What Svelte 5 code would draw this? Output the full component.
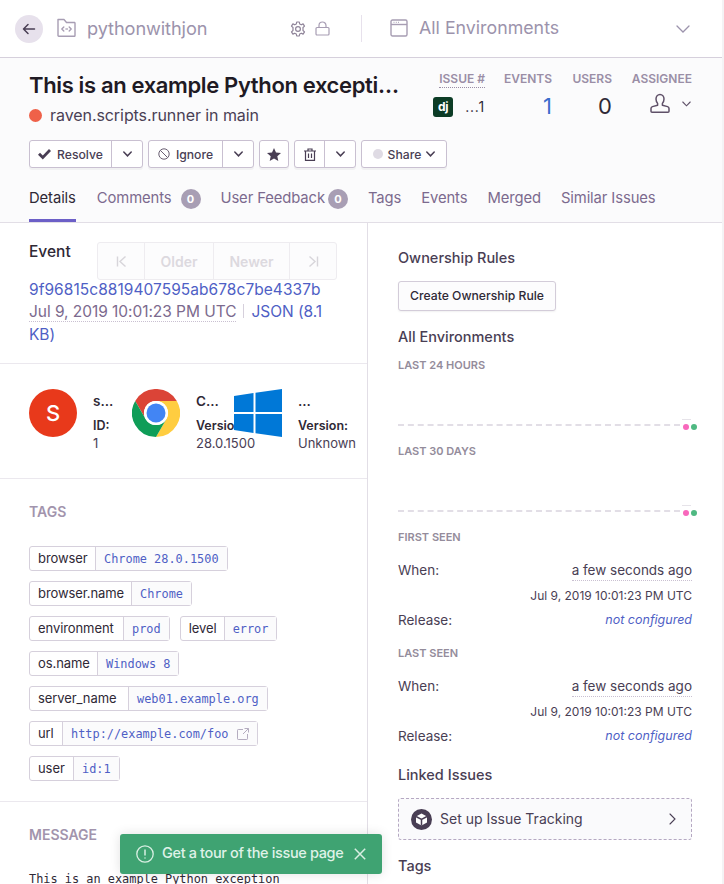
<script>
  const tags = [
    [{ k: 'browser', w: 65, v: 'Chrome 28.0.1500' }],
    [{ k: 'browser.name', w: 101, v: 'Chrome' }],
    [{ k: 'environment', w: 93, v: 'prod' }, { k: 'level', w: 43, v: 'error' }],
    [{ k: 'os.name', w: 67, v: 'Windows 8' }],
    [{ k: 'server_name', w: 98, v: 'web01.example.org' }],
    [{ k: 'url', w: 32, v: 'http://example.com/foo', ext: true }],
    [{ k: 'user', w: 43, v: 'id:1' }]
  ];
  const seen = ['FIRST SEEN', 'LAST SEEN'];
  const charts = ['LAST 24 HOURS', 'LAST 30 DAYS'];
</script>

<div class="page">
  <header class="top">
    <button class="back" aria-label="Back">
      <svg width="14" height="14" viewBox="0 0 14 14" fill="none" stroke="#493e54" stroke-width="1.5" stroke-linecap="round" stroke-linejoin="round"><path d="M1.5 7H12.5M6 2.5L1.5 7L6 11.5"/></svg>
    </button>
    <svg class="folder" width="19" height="20" viewBox="0 0 19 20" fill="none" stroke="#a79db3" stroke-width="1.4" stroke-linejoin="round"><path d="M1 1.5H7L9.5 4.5H17.5A.8.8 0 0 1 18 5.2V17.5A.8.8 0 0 1 17.5 18.3H1.8A.8.8 0 0 1 1 17.5Z"/><path d="M6.8 9L4.8 11L6.8 13M12.2 9L14.2 11L12.2 13M9 11H9.1M10.2 11H10.3" stroke-linecap="round"/></svg>
    <span class="project">pythonwithjon</span>
    <svg class="gear" width="16" height="16" viewBox="0 0 16 16" fill="none" stroke="#8f8499" stroke-width="1.2" stroke-linejoin="round"><circle cx="8" cy="8" r="2.4"/><path d="M6.7 1H9.3L9.7 3L11.3 3.8L13.1 2.9L14.5 5.1L13 6.5V9.5L14.5 10.9L13.1 13.1L11.3 12.2L9.7 13L9.3 15H6.7L6.3 13L4.7 12.2L2.9 13.1L1.5 10.9L3 9.5V6.5L1.5 5.1L2.9 2.9L4.7 3.8L6.3 3Z"/></svg>
    <svg class="lock" width="15" height="15" viewBox="0 0 15 15" fill="none" stroke="#a79db3" stroke-width="1.2"><rect x="1" y="6.5" width="13" height="7.5" rx="1"/><path d="M4 6.5V4.5A3.5 3.5 0 0 1 11 4.5V6.5"/></svg>
    <span class="vline"></span>
    <svg class="envicon" width="18" height="18" viewBox="0 0 18 18" fill="none" stroke="#a79db3" stroke-width="1.4"><rect x="1" y="1" width="16" height="16" rx="1.5"/><path d="M1 5.5H17"/><path d="M3.5 3.3H4.5M5.8 3.3H6.8M8 3.3H9" stroke-width="1"/></svg>
    <span class="envname">All Environments</span>
    <svg class="envchev" width="14" height="8" viewBox="0 0 14 8" fill="none" stroke="#9c93ac" stroke-width="1.3" stroke-linecap="round"><path d="M1 1L7 7L13 1"/></svg>
  </header>

  <section class="group">
    <div class="grouptop">
      <div class="titles">
        <h1>This is an example Python exception</h1>
        <div class="culprit"><span class="errdot"></span>raven.scripts.runner in main</div>
      </div>
      <div class="stats">
        <div class="stat s-issue">
          <span class="lab dotted">ISSUE #</span>
          <div class="issueval">
            <span class="dj">dj</span>
            <span class="short">...1</span>
          </div>
        </div>
        <div class="stat s-events"><span class="lab">EVENTS</span><span class="num blue">1</span></div>
        <div class="stat s-users"><span class="lab">USERS</span><span class="num">0</span></div>
        <div class="stat s-assign">
          <span class="lab">ASSIGNEE</span>
          <div class="assignee">
            <svg width="20" height="20" viewBox="0 0 20 20" fill="none" stroke="#5f5068" stroke-width="1.5" stroke-linejoin="round"><path d="M6 6A4 4.6 0 0 1 14 6C14 8 13.2 9.4 12.4 10.4V12.2L17.6 13.6C18.6 14 19 14.6 19 15.6V18.2C19 18.8 18.6 19.2 18 19.2H2C1.4 19.2 1 18.8 1 18.2V15.6C1 14.6 1.4 14 2.4 13.6L7.6 12.2V10.4C6.8 9.4 6 8 6 6Z"/></svg>
            <svg width="9" height="6" viewBox="0 0 9 6" fill="none" stroke="#5f5068" stroke-width="1.1" stroke-linecap="round"><path d="M.8 1L4.5 4.8L8.2 1"/></svg>
          </div>
        </div>
      </div>
    </div>

    <div class="actions">
      <div class="btn split b-resolve">
        <span class="main">
          <svg width="13" height="11" viewBox="0 0 13 11" fill="#493e54"><path d="M0 5.8L2 3.8L4.8 6.6L11 0L13 2L4.8 10.6Z"/></svg>
          Resolve
        </span>
        <span class="caret"><svg width="9" height="6" viewBox="0 0 9 6" fill="none" stroke="#493e54" stroke-width="1.5" stroke-linecap="round"><path d="M.8 1L4.5 4.8L8.2 1"/></svg></span>
      </div>
      <div class="btn split b-ignore">
        <span class="main">
          <svg width="12" height="12" viewBox="0 0 12 12" fill="none" stroke="#6a5f72" stroke-width="1"><circle cx="6" cy="6" r="5.2"/><path d="M2.3 2.3L9.7 9.7"/></svg>
          Ignore
        </span>
        <span class="caret"><svg width="9" height="6" viewBox="0 0 9 6" fill="none" stroke="#493e54" stroke-width="1.5" stroke-linecap="round"><path d="M.8 1L4.5 4.8L8.2 1"/></svg></span>
      </div>
      <div class="btn b-star" aria-label="Bookmark">
        <svg width="14" height="13" viewBox="0 0 14 13" fill="#493e54"><path d="M7 0L9 4.4L14 5L10.3 8.2L11.3 13L7 10.6L2.7 13L3.7 8.2L0 5L5 4.4Z"/></svg>
      </div>
      <div class="btn split b-trash">
        <span class="main">
          <svg width="12" height="13" viewBox="0 0 12 13" fill="none" stroke="#493e54" stroke-width="1.2"><path d="M0 3H12M4 3V1H8V3M1.5 3V12.4H10.5V3M4.5 5.5V10M7.5 5.5V10"/></svg>
        </span>
        <span class="caret"><svg width="9" height="6" viewBox="0 0 9 6" fill="none" stroke="#493e54" stroke-width="1.5" stroke-linecap="round"><path d="M.8 1L4.5 4.8L8.2 1"/></svg></span>
      </div>
      <div class="btn b-share">
        <span class="sharedot"></span>Share
        <svg width="9" height="6" viewBox="0 0 9 6" fill="none" stroke="#493e54" stroke-width="1.5" stroke-linecap="round"><path d="M.8 1L4.5 4.8L8.2 1"/></svg>
      </div>
    </div>

    <nav class="tabs">
      <span class="tab active">Details</span>
      <span class="tab">Comments<i class="badge">0</i></span>
      <span class="tab">User Feedback<i class="badge b2">0</i></span>
      <span class="tab">Tags</span>
      <span class="tab">Events</span>
      <span class="tab">Merged</span>
      <span class="tab">Similar Issues</span>
    </nav>
  </section>

  <div class="cols">
    <main class="left">
      <section class="event">
        <div class="eventhead">
          <span class="eventtitle">Event</span>
          <div class="pager">
            <span class="pg p1"><svg width="11" height="11" viewBox="0 0 11 11" fill="none" stroke="#493e54" stroke-width="1.4"><path d="M1.5 .5V10.5M9.5 .5L4 5.5L9.5 10.5"/></svg></span>
            <span class="pg p2">Older</span>
            <span class="pg p3">Newer</span>
            <span class="pg p4"><svg width="11" height="11" viewBox="0 0 11 11" fill="none" stroke="#493e54" stroke-width="1.4"><path d="M9.5 .5V10.5M1.5 .5L7 5.5L1.5 10.5"/></svg></span>
          </div>
        </div>
        <div class="hash">9f96815c8819407595ab678c7be4337b</div>
        <div class="eventmeta"><span class="evdate">Jul 9, 2019 10:01:23 PM UTC</span><span class="sep"></span><span class="json">JSON (8.1 KB)</span></div>
      </section>

      <section class="context">
        <div class="ctx c-user">
          <span class="avatar">S</span>
          <div class="ctxtext"><b>s...</b><b class="ver">ID:</b><span>1</span></div>
        </div>
        <div class="ctx c-chrome">
          <svg class="logo" width="48" height="48" viewBox="0 0 48 48">
            <path fill="#db4437" d="M3.2 12A24 24 0 0 1 44.8 12H24A12 12 0 0 0 13.6 30Z"/>
            <path fill="#ffcd40" d="M44.8 12A24 24 0 0 1 24 48L34.4 30A12 12 0 0 0 24 12Z"/>
            <path fill="#0f9d58" d="M24 48A24 24 0 0 1 3.2 12L13.6 30A12 12 0 0 0 34.4 30Z"/>
            <circle cx="24" cy="24" r="12" fill="#fff"/>
            <circle cx="24" cy="24" r="9.5" fill="#4285f4"/>
          </svg>
          <div class="ctxtext"><b>C...</b><b class="ver">Version:</b><span>28.0.1500</span></div>
        </div>
        <div class="ctx c-os">
          <svg class="logo" width="48" height="48" viewBox="0 0 48 48" fill="#0078d7">
            <path d="M0 7L19.5 4V23H0Z"/><path d="M21.5 3.7L48 0V23H21.5Z"/><path d="M0 25H19.5V44L0 41Z"/><path d="M21.5 25H48V48L21.5 44.3Z"/>
          </svg>
          <div class="ctxtext"><b>...</b><b class="ver">Version:</b><span>Unknown</span></div>
        </div>
      </section>

      <section class="tagsec">
        <h3>TAGS</h3>
        <div class="taglist">
          {#each tags as row}
            <div class="tagrow">
              {#each row as t}
                <div class="tag">
                  <span class="k" style="width: {t.w}px">{t.k}</span>
                  <span class="v">{t.v}{#if t.ext}<svg class="ext" width="12" height="12" viewBox="0 0 12 12" fill="none" stroke="#b5adc0" stroke-width="1"><path d="M6 1.5H1.2A.7.7 0 0 0 .5 2.2V10.8A.7.7 0 0 0 1.2 11.5H9.8A.7.7 0 0 0 10.500 10.800V6M7.500 .5H11.500V4.500M11.500 .5L6 6"/></svg>{/if}</span>
                </div>
              {/each}
            </div>
          {/each}
        </div>
      </section>

      <section class="message">
        <h3>MESSAGE</h3>
        <pre>This is an example Python exception</pre>
      </section>
    </main>

    <aside class="side">
      <h4 class="h-own">Ownership Rules</h4>
      <div class="ownbtn">Create Ownership Rule</div>
      <h4 class="h-env">All Environments</h4>
      {#each charts as c}
        <h6>{c}</h6>
        <div class="chart">
          <span class="dash"></span>
          <span class="tick"></span>
          <span class="dot pink"></span>
          <span class="dot green"></span>
        </div>
      {/each}
      {#each seen as s}
        <h6>{s}</h6>
        <div class="kv when"><span>When:</span><span class="dotted ago">a few seconds ago</span></div>
        <div class="fulldate">Jul 9, 2019 10:01:23 PM UTC</div>
        <div class="kv rel"><span>Release:</span><em>not configured</em></div>
      {/each}
      <h4 class="h-linked">Linked Issues</h4>
      <div class="tracking">
        <svg width="21" height="21" viewBox="0 0 21 21"><circle cx="10.500" cy="10.500" r="10.500" fill="#493e54"/><path d="M10.500 4.500L16 7.500V13.500L10.500 16.500L5 13.500V7.500Z" fill="#fff"/><path d="M5 7.500L10.500 10.500L16 7.500M10.500 10.500V16.500" fill="none" stroke="#493e54" stroke-width="1.500"/></svg>
        <span>Set up Issue Tracking</span>
        <svg class="chev" width="7" height="12" viewBox="0 0 7 12" fill="none" stroke="#493e54" stroke-width="1.100" stroke-linecap="round"><path d="M1 1L6 6L1 11"/></svg>
      </div>
      <h4 class="h-tags">Tags</h4>
    </aside>
  </div>

  <div class="toast">
    <svg width="18" height="18" viewBox="0 0 18 18" fill="none" stroke="#d9efe3" stroke-width="1.300"><circle cx="9" cy="9" r="8.200"/><path d="M9 4.500V10.500M9 12.500V13.500" stroke-width="1.500"/></svg>
    <span>Get a tour of the issue page</span>
    <svg class="x" width="12" height="12" viewBox="0 0 12 12" fill="none" stroke="#d9efe3" stroke-width="1.500"><path d="M.8 .8L11.200 11.200M11.200 .8L.8 11.200"/></svg>
  </div>
</div>

<style>
  :global(body) { margin: 0; background: #fff; }
  .page {
    position: relative;
    width: 722px;
    height: 884px;
    overflow: hidden;
    font-family: Inter, "Liberation Sans", sans-serif;
    color: #2f2936;
    font-size: 15px;
    background: #fff;
    border-right: 2px solid #f4f3f5;
  }

  .top {
    height: 57px;
    display: flex;
    align-items: center;
    border-bottom: 1px solid #d6d0dc;
    background: #fff;
    color: #9c93ac;
  }
  .back {
    width: 28px; height: 28px; margin-left: 15px; padding: 0; border: 0;
    border-radius: 50%; background: #e7e1ec;
    display: flex; align-items: center; justify-content: center;
  }
  .folder { margin-left: 14px; margin-top: -2px; }
  .project { margin-left: 11px; font-size: 18.200px; width: 203px; letter-spacing: -.1px; color: #9c93ac; padding-bottom: 2px; }
  .gear { margin-left: 0; }
  .lock { margin-left: 9px; margin-top: -1px; }
  .vline { width: 1px; height: 27px; background: #e7e1ec; margin-left: 31px; }
  .envicon { margin-left: 28px; margin-top: -2px; }
  .envname { margin-left: 11px; font-size: 17.800px; width: 257px; color: #9c93ac; padding-bottom: 2px; }
  .envchev { margin-top: 1px; }

  .group {
    height: 165px;
    box-sizing: border-box;
    background: #fbfbfc;
    border-bottom: 1px solid #e2dee6;
    padding-left: 29px;
  }
  .grouptop { display: flex; height: 82px; }
  .titles { width: 372px; padding-top: 14px; }
  h1 {
    margin: 0; font-size: 22px; line-height: 26px; font-weight: 600;
    color: #1f1a24; white-space: nowrap; overflow: hidden; text-overflow: ellipsis;
    letter-spacing: -.36px;
  }
  .culprit {
    display: flex; align-items: center; margin-top: 5px;
    font-size: 16px; line-height: 24px; color: #4a3f55; letter-spacing: -.07px;
  }
  .errdot { width: 13px; height: 13px; border-radius: 50%; background: #ef6149; margin-right: 8px; }

  .stats { position: relative; flex: 1; display: flex; padding-top: 14px; padding-left: 37px; }
  .stat { display: flex; flex-direction: column; align-items: flex-end; }
  .s-issue { width: 47px; }
  .s-events { width: 47px; margin-left: 20px; }
  .s-users { width: 40px; margin-left: 20px; }
  .s-assign { width: 60px; margin-left: 20px; }
  .lab {
    font-size: 12px; font-weight: 600; line-height: 14px; color: #9a8ea6;
    white-space: nowrap; letter-spacing: 0;
  }
  .lab.dotted { border-bottom: 1px dotted #9a8ea6; padding-bottom: 1px; }
  .issueval { display: flex; align-items: center; margin-top: 9px; margin-left: -5px; gap: 12px; }
  .dj {
    width: 20px; height: 20px; background: #0c3c26; color: #fff; border-radius: 3px;
    font-size: 12px; font-weight: 700; line-height: 19px; text-align: center; letter-spacing: -.3px;
  }
  .short { font-size: 14px; color: #2f2936; width: 20px; text-align: right; line-height: 20px; letter-spacing: .8px; }
  .num { font-size: 22px; line-height: 26px; margin-top: 7px; color: #2f2936; }
  .num.blue { color: #3b6ecc; }
  .assignee { display: flex; align-items: center; gap: 12px; margin-top: 7px; padding-right: 1px; }
  .assignee svg:last-child { margin-top: 1px; }

  .actions { display: flex; gap: 5px; margin-top: 0; height: 28px; box-sizing: content-box; }
  .btn {
    box-sizing: border-box; height: 28px;
    display: flex; align-items: center; justify-content: center;
    background: #fff;
    border: 1px solid #c9c0d1; border-radius: 3px;
    box-shadow: 0 2px 0 rgba(0,0,0,.04);
    font-size: 12.200px; font-weight: 500; color: #493e54;
  }
  .btn.split { justify-content: flex-start; }
  .main { display: flex; align-items: center; justify-content: center; gap: 6px; height: 100%; }
  .caret { display: flex; align-items: center; justify-content: center; height: 100%; border-left: 1px solid #c9c0d1; flex: 1; }
  .b-resolve { width: 114px; } .b-resolve .main { width: 81px; }
  .b-ignore { width: 106px; } .b-ignore .main { width: 73px; }
  .b-star { width: 30px; }
  .b-trash { width: 62px; } .b-trash .main { width: 29px; }
  .b-share { width: 86px; gap: 5px; }
  .sharedot { width: 10px; height: 10px; border-radius: 50%; background: #dfdbe4; }

  .tabs { display: flex; height: 55px; margin-top: 0; align-items: stretch; }
  .tab {
    box-sizing: border-box; height: 55px; padding-top: 20px; margin-right: 20px;
    font-size: 14.800px; line-height: 20px; color: #7c6a8e; white-space: nowrap;
    border-bottom: 3px solid transparent; letter-spacing: -.1px;
  }
  .tab.active { color: #2f2936; border-bottom-color: #6c5fc7; height: 54px; margin-right: 21px; }
  .badge {
    display: inline-block; width: 20px; height: 20px; border-radius: 50%;
    background: #a89eb4; color: #fff; font-style: normal; font-size: 11px; font-weight: 700;
    line-height: 20px; text-align: center; margin-left: 9px; vertical-align: 0;
  }
  .badge.b2 { margin-left: 3px; }

  .cols { display: flex; align-items: stretch; }
  .left { width: 368px; box-sizing: border-box; border-right: 1px solid #e2dee6; flex: none; }
  .event { height: 141px; box-sizing: border-box; padding: 19px 29px 0; border-bottom: 1px solid #ebe8ee; }
  .eventhead { display: flex; height: 37px; position: relative; }
  .eventtitle { font-size: 15.500px; font-weight: 500; line-height: 20px; color: #2f2936; width: 68px; flex: none; }
  .pager {
    margin-top: 0; display: flex; height: 38px; box-sizing: border-box; flex: none;
    border: 1px solid #eeecf0; border-radius: 3px; background: #fcfcfd;
    font-size: 14px; font-weight: 600; color: #dcd9df;
  }
  .pg { display: flex; align-items: center; justify-content: center; box-sizing: border-box; border-right: 1px solid #eeecf0; height: 100%; }
  .pg svg { opacity: .2; }
  .p1 { width: 47px; } .p2 { width: 69px; } .p3 { width: 76px; } .p4 { width: 46px; border-right: 0; }
  .hash { margin-top: 0; font-size: 15.500px; line-height: 21px; color: #4f5fc5; letter-spacing: .05px; white-space: nowrap; }
  .eventmeta { font-size: 15.500px; line-height: 23px; color: #7c6a8e; width: 310px; letter-spacing: -.05px; }
  .evdate { border-bottom: 1px dotted #c9c0d1; }
  .sep { display: inline-block; width: 1px; height: 14px; background: #d6d0dc; margin: 0 7px 0 7px; vertical-align: -1px; }
  .json { color: #4f5fc5; }

  .context { height: 115px; box-sizing: border-box; padding: 25px 0 0 29px; display: flex; border-bottom: 1px solid #ebe8ee; position: relative; }
  .ctx { display: flex; flex: none; }
  .c-user { width: 103px; } .c-chrome { width: 102px; } .c-os { width: 126px; position: relative; }
  .logo { flex: none; }
  .avatar {
    width: 48px; height: 48px; border-radius: 50%; background: #e8391b; color: #fff;
    font-size: 22px; line-height: 48px; text-align: center; flex: none; font-weight: 500;
  }
  .ctxtext { margin-left: 16px; display: flex; flex-direction: column; font-size: 13px; line-height: 18px; color: #493e54; white-space: nowrap; padding-top: 2px; }
  .ctxtext b { font-weight: 600; color: #2f2936; }
  .ctxtext b:first-child { font-size: 13.500px; line-height: 20px; }
  .ctxtext .ver { margin-top: 6px; font-size: 12.500px; line-height: 17px; }
  .c-chrome .ctxtext { width: 58px; }
  .c-chrome .ver { width: 38px; overflow: hidden; }

  .tagsec { height: 323px; box-sizing: border-box; padding: 24px 0 0 29px; border-bottom: 1px solid #ebe8ee; }
  h3 { margin: 0; font-size: 14px; line-height: 18px; font-weight: 600; color: #a294ad; }
  .taglist { margin-top: 25px; display: flex; flex-direction: column; gap: 10px; }
  .tagrow { display: flex; gap: 10px; height: 25px; }
  .tag {
    display: flex; height: 25px; box-sizing: border-box;
    border: 1px solid #d6d0dc; border-radius: 3px; background: #fff; line-height: 23px;
  }
  .k { box-sizing: border-box; padding: 0 0 0 8px; font-size: 13px; color: #2f2936; white-space: nowrap; letter-spacing: -.08px; }
  .v {
    display: flex; align-items: center; padding: 1px 8px 0 8px; border-left: 1px solid #d6d0dc; background: #fbfbfc;
    font-family: "DejaVu Sans Mono", monospace; font-size: 11.900px; color: #4f5fc5; white-space: pre;
  }
  .ext { margin-left: 8px; margin-top: -1px; }

  .message { padding: 24px 0 0 29px; }
  pre { margin: 26px 0 0; font-family: "DejaVu Sans Mono", monospace; font-size: 11.900px; line-height: 18px; color: #2f2936; }

  .side { flex: 1; min-width: 0; padding: 25px 30px 0 30px; color: #493e54; }
  h4 { margin: 0; font-size: 14.500px; line-height: 20px; font-weight: 500; color: #493e54; }
  .ownbtn {
    margin-top: 13px; width: 158px; height: 30px; box-sizing: border-box;
    border: 1px solid #d3ccd9; border-radius: 3px; background: #fcfcfd;
    box-shadow: 0 1px 2px rgba(0,0,0,.06);
    font-size: 12.200px; font-weight: 500; line-height: 28px; text-align: center; color: #2f2936;
  }
  .h-env { margin-top: 16px; padding-bottom: 2px; }
  h6 { margin: 9px 0 0; font-size: 11px; line-height: 14px; font-weight: 600; color: #948c9b; }
  .chart { position: relative; height: 63px; width: 294px; }
  .dash { position: absolute; left: 0; right: 12px; top: 52px; border-top: 2px dashed #e2dee6; }
  .tick { position: absolute; left: 284px; top: 47px; width: 9px; height: 5px; border-top: 1px solid #e6e3e9; }
  .dot { position: absolute; top: 52px; width: 6px; height: 6px; border-radius: 50%; }
  .pink { left: 285px; background: #f868bc; }
  .green { left: 293px; background: #4fb982; }
  .kv { display: flex; justify-content: space-between; font-size: 13.500px; line-height: 18px; color: #493e54; }
  .when { margin-top: 17px; height: 20px; }
  .ago { border-bottom: 1px dotted #c9c0d1; height: 19px; }
  .fulldate { margin-top: 6px; text-align: right; font-size: 12px; line-height: 18px; color: #493e54; }
  .rel { margin-top: 6px; height: 20px; margin-bottom: 15px; }
  em { font-size: 12.500px; color: #4f5fc5; }
  .h-linked { margin-top: 18px; }
  .tracking {
    margin-top: 13px; height: 42px; box-sizing: border-box;
    border: 1px dashed #b5a8c2; border-radius: 3px; background: #fafafc;
    display: flex; align-items: center; padding: 0 15px 0 12px; font-size: 14px; color: #493e54;
  }
  .tracking span { margin-left: 8px; margin-bottom: 2px; }
  .chev { margin-left: auto; }
  .h-tags { margin-top: 16px; }

  .toast {
    position: absolute; left: 120px; top: 834px; width: 262px; height: 40px; box-sizing: border-box;
    background: #3fa372; border-radius: 3px; box-shadow: 0 0 12px rgba(0,0,0,.12);
    display: flex; align-items: center; padding-left: 16px; color: #dff2e8;
    font-size: 14.500px; font-weight: 500; letter-spacing: -.36px;
  }
  .toast span { margin-left: 8px; margin-bottom: 3px; white-space: nowrap; }
  .toast .x { position: absolute; left: 234px; top: 14px; }
</style>
